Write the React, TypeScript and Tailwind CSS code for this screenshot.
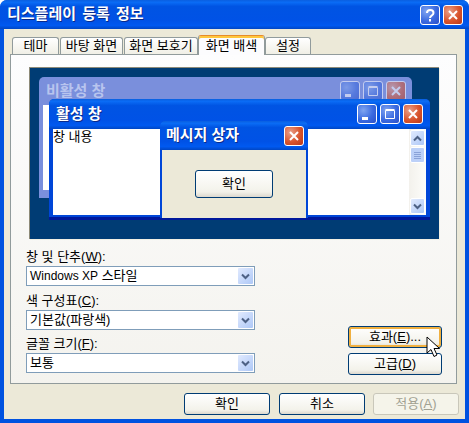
import type { ReactNode } from "react";

const FONT = "font-['Liberation_Sans','Noto_Sans_CJK_KR',sans-serif]";
const TITLE_BG =
  "bg-[linear-gradient(180deg,#0a5fe0_0%,#0a6cf5_8%,#0054e3_22%,#0052e6_70%,#0059f0_88%,#0046c4_100%)]";

function CaptionButton({ kind, dim }: { kind: "min" | "max" | "close" | "help"; dim?: boolean }) {
  const red = kind === "close";
  return (
    <div
      className={`flex h-[20px] w-[20px] items-center justify-center rounded-[3px] border border-white ${
        red
          ? "bg-[radial-gradient(circle_at_30%_30%,#e8a08a,#d9542c_55%,#b8381a)]"
          : "bg-[radial-gradient(circle_at_30%_30%,#7fa4f0,#3a6ae0_55%,#2a4fc8)]"
      } ${dim ? "opacity-55" : ""}`}
    >
      <svg width="14" height="14" viewBox="0 0 14 14">
        {kind === "close" && <path d="M3 3l8 8M11 3l-8 8" stroke="#fff" strokeWidth="2" fill="none" />}
        {kind === "min" && <rect x="2" y="10" width="6" height="3" fill="#fff" />}
        {kind === "max" && (
          <path d="M2.5 3.500h9v8h-9zM2.5 2.500h9" stroke="#fff" strokeWidth="1" fill="none" />
        )}
        {kind === "help" && (
          <path d="M4 5c0-4 6.500-4 6.500 0 0 2.500-3.500 2.500-3.500 5M7 11v2.500" stroke="#fff" strokeWidth="2" fill="none" />
        )}
      </svg>
    </div>
  );
}

function XpButton({
  children,
  focus,
  disabled,
  className = "",
}: {
  children: ReactNode;
  focus?: boolean;
  disabled?: boolean;
  className?: string;
}) {
  return (
    <div
      className={`flex items-center justify-center rounded-[3px] border text-[13px] ${className} ${
        disabled
          ? "border-[#c9c7ba] bg-[#f5f4ea] text-[#a1a192]"
          : "border-[#003c74] bg-[linear-gradient(180deg,#ffffff,#f3f2ea_80%,#dcd8ce)] text-black"
      } ${focus ? "shadow-[inset_0_0_0_2px_#f0b040]" : ""}`}
    >
      {children}
    </div>
  );
}

function Combo({
  label,
  mnemonic,
  children,
  className = "",
}: {
  label: string;
  mnemonic: string;
  children: ReactNode;
  className?: string;
}) {
  return (
    <div className={`flex flex-col ${className}`}>
      <div className="h-[17px] text-[13px] leading-[16px] text-black">
        {label}(<span className="underline">{mnemonic}</span>):
      </div>
      <div className="flex h-[20px] w-[229px] items-center justify-between border border-[#7f9db9] bg-white pl-[3px] pr-[1px] text-[13px]">
        <span>{children}</span>
        <div className="flex h-[16px] w-[15px] items-center justify-center rounded-[1px] bg-[linear-gradient(135deg,#e1eafe,#aec8f7)]">
          <svg width="9" height="7" viewBox="0 0 9 7">
            <path d="M1 1.500l3.500 3.500 3.500-3.500" stroke="#4d6185" strokeWidth="2" fill="none" />
          </svg>
        </div>
      </div>
    </div>
  );
}

function Tab({ label, active, className = "" }: { label: string; active?: boolean; className?: string }) {
  return (
    <div
      className={`flex items-center justify-center rounded-t-[3px] border border-b-0 text-[13px] text-black ${className} ${
        active
          ? "z-10 -mb-px h-[20px] border-[#919b9c] border-t-[#e68b2c] bg-[#fcfcfe] shadow-[inset_0_2px_0_#ffc73c]"
          : "h-[17px] border-[#919b9c] bg-[linear-gradient(180deg,#ffffff,#f0efe6)]"
      }`}
    >
      {label}
    </div>
  );
}

function ScrollButton({ dir }: { dir: "up" | "down" }) {
  return (
    <div className="flex h-[16px] w-[15px] items-center justify-center rounded-[2px] border border-white bg-[linear-gradient(135deg,#e1eafe,#aec8f7)]">
      <svg width="9" height="7" viewBox="0 0 9 7">
        <path
          d={dir === "up" ? "M1 5.500l3.500-3.500 3.500 3.500" : "M1 1.500l3.500 3.500 3.500-3.500"}
          stroke="#4d6185"
          strokeWidth="2"
          fill="none"
        />
      </svg>
    </div>
  );
}

export default function App() {
  return (
    <div className={`${FONT} relative flex h-[423px] w-[469px] flex-col overflow-hidden rounded-t-[7px] bg-[#0052e0] text-black`}>
      {/* Title bar */}
      <div className={`flex h-[29px] shrink-0 items-center justify-between pl-[7px] pr-[6px] ${TITLE_BG}`}>
        <span className="text-[15px] font-bold text-white [text-shadow:1px_1px_0_#0a2a8a] [word-spacing:2px]">
          디스플레이 등록 정보
        </span>
        <div className="flex gap-[3px]">
          <CaptionButton kind="help" />
          <CaptionButton kind="close" />
        </div>
      </div>

      {/* Dialog body */}
      <div className="mx-[4px] mb-[4px] flex grow flex-col bg-[#ece9d8] px-[6px] pt-[6px]">
        <div className="flex h-[19px] items-end pl-[2px]">
          <Tab label="테마" className="ml-0 w-[47px]" />
          <Tab label="바탕 화면" className="ml-[1px] w-[63px]" />
          <Tab label="화면 보호기" className="ml-[1px] w-[74px]" />
          <Tab label="화면 배색" active className="w-[67px]" />
          <Tab label="설정" className="w-[46px]" />
        </div>

        <div className="relative flex h-[330px] w-[447px] flex-col border border-[#919b9c] bg-[linear-gradient(180deg,#fdfdfe,#f4f3ee)] pl-[18px] pt-[12px]">
          {/* Preview canvas */}
          <div className="relative h-[172px] w-[410px] shrink-0 border-l border-t border-[#8d8a78] bg-[#003c74] shadow-[1px_1px_0_#f2f0e4]">
            {/* Inactive window */}
            <div className="absolute left-[9px] top-[9px] h-[121px] w-[373px] rounded-t-[5px] bg-[#7a8fdc]">
              <div className="flex h-[28px] items-center justify-between pl-[7px] pr-[6px]">
                <span className="text-[15px] font-bold text-[#b8c4ee]">비활성 창</span>
                <div className="flex gap-[3px]">
                  <CaptionButton kind="min" dim />
                  <CaptionButton kind="max" dim />
                  <CaptionButton kind="close" dim />
                </div>
              </div>
              <div className="mx-[4px] h-[85px] bg-white" />
            </div>

            {/* Active window */}
            <div className="absolute left-[19px] top-[31px] flex h-[121px] w-[381px] flex-col rounded-t-[5px] bg-[#0046d8] shadow-[inset_0_-3px_0_#00189c]">
              <div className={`flex h-[30px] shrink-0 items-center justify-between rounded-t-[5px] pl-[7px] pr-[7px] ${TITLE_BG}`}>
                <span className="text-[15px] font-bold text-white [text-shadow:1px_1px_0_#0a2a8a]">활성 창</span>
                <div className="flex gap-[3px]">
                  <CaptionButton kind="min" />
                  <CaptionButton kind="max" />
                  <CaptionButton kind="close" />
                </div>
              </div>
              <div className="mx-[4px] flex h-[86px] justify-between bg-white">
                <span className="text-[13px] leading-[15px]">창 내용</span>
                <div className="flex w-[17px] flex-col items-center justify-between bg-[linear-gradient(90deg,#f3f1ec,#fdfdfa)] py-[1px]">
                  <div className="flex flex-col gap-[1px]">
                    <ScrollButton dir="up" />
                    <div className="flex h-[16px] w-[15px] flex-col items-center justify-center gap-[1px] rounded-[2px] border border-white bg-[#bcd0f8]">
                      <span className="h-px w-[7px] bg-[#8aa2d8]" />
                      <span className="h-px w-[7px] bg-[#8aa2d8]" />
                      <span className="h-px w-[7px] bg-[#8aa2d8]" />
                      <span className="h-px w-[7px] bg-[#8aa2d8]" />
                    </div>
                  </div>
                  <ScrollButton dir="down" />
                </div>
              </div>
            </div>

            {/* Message box */}
            <div className="absolute left-[130px] top-[53px] flex h-[99px] w-[148px] flex-col rounded-t-[5px] bg-[#0046d8] shadow-[inset_0_-2px_0_#00189c]">
              <div className={`flex h-[29px] shrink-0 items-center justify-between rounded-t-[5px] pl-[6px] pr-[4px] ${TITLE_BG}`}>
                <span className="text-[15px] font-bold text-white [text-shadow:1px_1px_0_#0a2a8a]">메시지 상자</span>
                <CaptionButton kind="close" />
              </div>
              <div className="mx-[2px] flex h-[68px] items-center justify-center bg-[#ece9d8]">
                <XpButton className="h-[28px] w-[78px]">확인</XpButton>
              </div>
            </div>
          </div>

          {/* Scheme options */}
          <div className="mt-[10px] flex items-end justify-between pr-[14px]">
            <div className="-ml-[3px] flex flex-col gap-[6px]">
              <Combo label="창 및 단추" mnemonic="W">
                <span className="text-[12px]">Windows XP</span> 스타일
              </Combo>
              <Combo label="색 구성표" mnemonic="C" className="mt-px">
                기본값(파랑색)
              </Combo>
              <Combo label="글꼴 크기" mnemonic="F">
                보통
              </Combo>
            </div>
            <div className="-mb-[2px] flex flex-col gap-[5px]">
              <XpButton focus className="h-[22px] w-[94px]">
                <span>
                  효과(<span className="underline">E</span>)...
                </span>
              </XpButton>
              <XpButton className="h-[22px] w-[94px]">
                <span>
                  고급(<span className="underline">D</span>)
                </span>
              </XpButton>
            </div>
          </div>
        </div>

        {/* Dialog buttons */}
        <div className="mt-[9px] flex justify-end gap-[8px]">
          <XpButton className="mr-px h-[22px] w-[86px]">확인</XpButton>
          <XpButton className="h-[22px] w-[86px]">취소</XpButton>
          <XpButton disabled className="h-[22px] w-[86px]">
            <span>
              적용(<span className="underline">A</span>)
            </span>
          </XpButton>
        </div>
      </div>

      {/* Mouse pointer */}
      <svg className="absolute left-[426px] top-[336px]" width="16" height="24" viewBox="0 0 16 24">
        <path
          d="M1 1v16l4-3.500 3 7 3-1.500-3-6.500h5.500z"
          fill="#fff"
          stroke="#000"
          strokeWidth="1"
          strokeLinejoin="miter"
        />
      </svg>
    </div>
  );
}
